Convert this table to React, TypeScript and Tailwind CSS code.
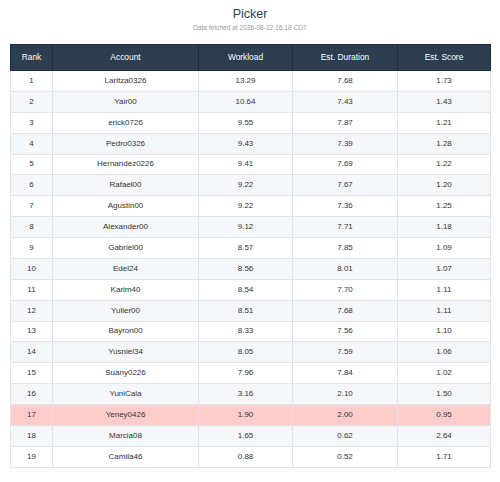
import React from 'react';

const rows: [string, string, string, string][] = [
  ['Laritza0326', '13.29', '7.68', '1.73'],
  ['Yair00', '10.64', '7.43', '1.43'],
  ['erick0726', '9.55', '7.87', '1.21'],
  ['Pedro0326', '9.43', '7.39', '1.28'],
  ['Hernandez0226', '9.41', '7.69', '1.22'],
  ['Rafael00', '9.22', '7.67', '1.20'],
  ['Agustin00', '9.22', '7.36', '1.25'],
  ['Alexander00', '9.12', '7.71', '1.18'],
  ['Gabriel00', '8.57', '7.85', '1.09'],
  ['Edel24', '8.56', '8.01', '1.07'],
  ['Karim40', '8.54', '7.70', '1.11'],
  ['Yuller00', '8.51', '7.68', '1.11'],
  ['Bayron00', '8.33', '7.56', '1.10'],
  ['Yusniel34', '8.05', '7.59', '1.06'],
  ['Suany0226', '7.96', '7.84', '1.02'],
  ['YuniCala', '3.16', '2.10', '1.50'],
  ['Yeney0426', '1.90', '2.00', '0.95'],
  ['Marcia08', '1.65', '0.62', '2.64'],
  ['Camila46', '0.88', '0.52', '1.71'],
];

const highlight = 'Yeney0426';

export default function App() {
  return (
    <div className="w-[500px] h-[482px] bg-white px-[10px] pt-[7px] font-['Liberation_Sans',Arial,sans-serif]">
      <h1 className="text-center text-[12.5px] leading-[14px] text-[#2c3e50]">Picker</h1>
      <p className="text-center text-[6.6px] leading-[10px] mt-[2px] text-[#9a9a9a]">
        Data fetched at 2026-08-12 16:18 CDT
      </p>
      <table className="mt-[11px] w-[480px] border-collapse table-fixed text-[8px] text-[#333]">
        <colgroup>
          <col className="w-[42px]" />
          <col className="w-[146px]" />
          <col className="w-[94px]" />
          <col className="w-[105px]" />
          <col className="w-[93px]" />
        </colgroup>
        <thead>
          <tr className="h-[26px] bg-[#2c3e50] text-white text-[8.4px]">
            {['Rank', 'Account', 'Workload', 'Est. Duration', 'Est. Score'].map((h) => (
              <th key={h} className="border border-[#1f2e3d] font-normal text-center">
                {h}
              </th>
            ))}
          </tr>
        </thead>
        <tbody>
          {rows.map((r, i) => (
            <tr
              key={r[0]}
              className={`h-[20.88px] ${
                r[0] === highlight ? 'bg-[#ffcccc]' : i % 2 === 1 ? 'bg-[#f5f7fa]' : 'bg-white'
              }`}
            >
              <td className="border border-[#dfe4ea] text-center">{i + 1}</td>
              {r.map((c, j) => (
                <td key={j} className="border border-[#dfe4ea] text-center">
                  {c}
                </td>
              ))}
            </tr>
          ))}
        </tbody>
      </table>
    </div>
  );
}
